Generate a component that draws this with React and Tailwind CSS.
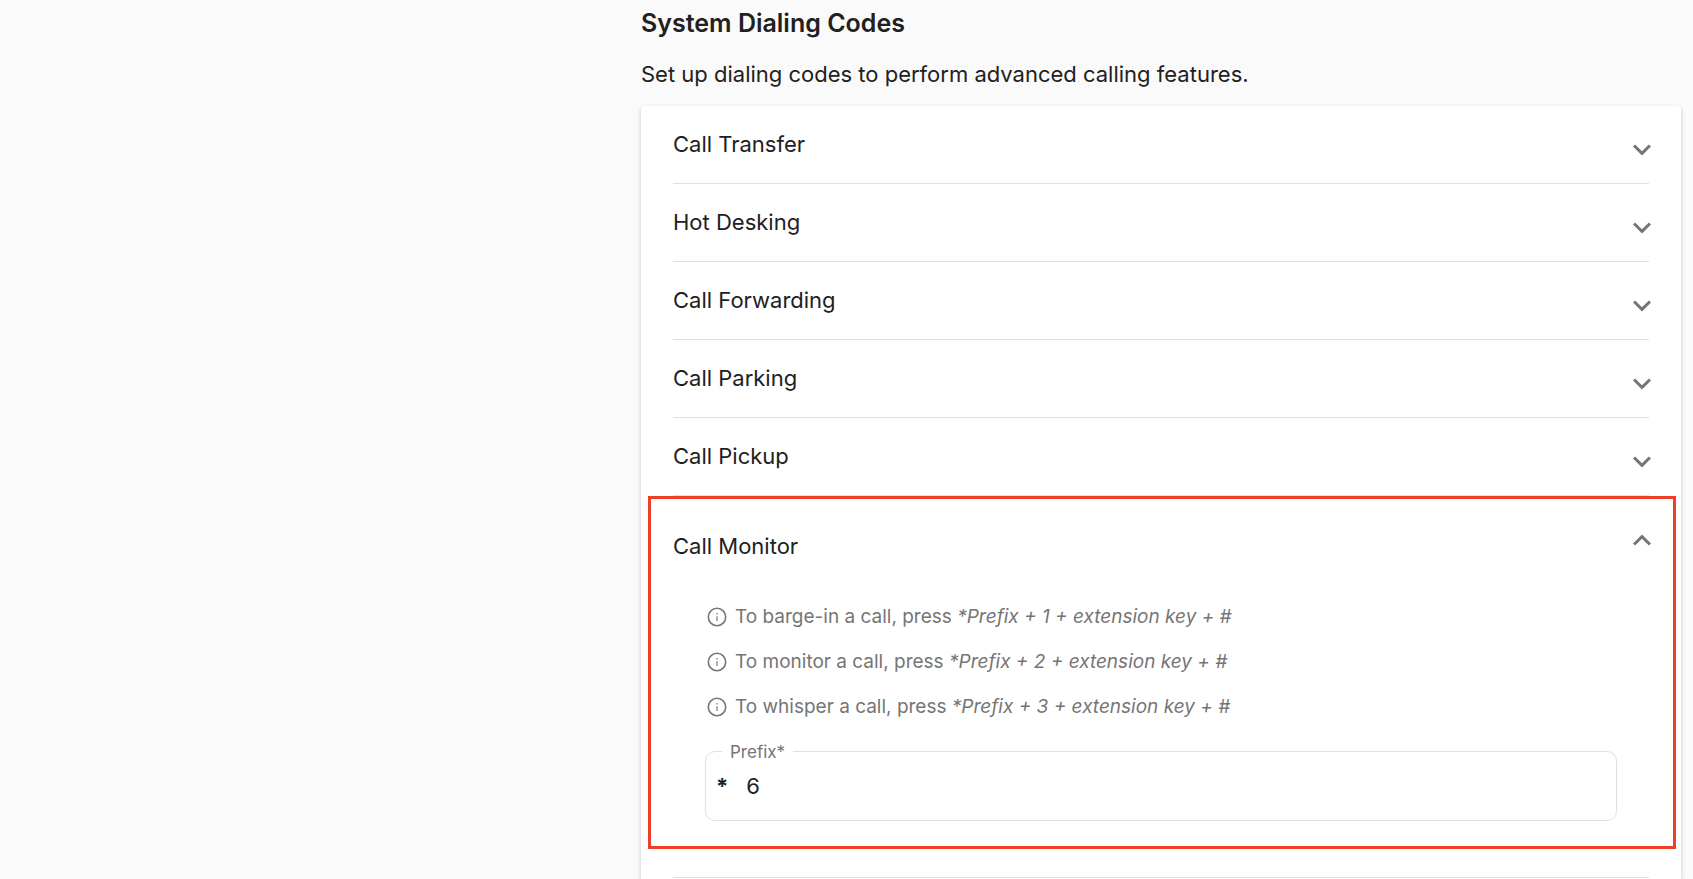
import React, { useState } from 'react';
import clsx from 'clsx';

const sections = ['Call Transfer', 'Hot Desking', 'Call Forwarding', 'Call Parking', 'Call Pickup'];

const hints = [
  { id: 1, text: 'To barge-in a call, press', code: '*Prefix + 1 + extension key + #' },
  { id: 2, text: 'To monitor a call, press', code: '*Prefix + 2 + extension key + #' },
  { id: 3, text: 'To whisper a call, press', code: '*Prefix + 3 + extension key + #' },
];

function Chevron({ up }) {
  return (
    <svg
      viewBox="6 8 12 8"
      className={clsx('h-3 w-[18px] flex-shrink-0 fill-[#757575]', up && 'rotate-180')}
      aria-hidden="true"
    >
      <path d="M16.59 8.3L12 12.88 7.41 8.3 6 9.71l6 6 6-6z" />
    </svg>
  );
}

function InfoIcon() {
  return (
    <svg viewBox="0 0 20 20" className="h-5 w-5 flex-shrink-0" fill="none" aria-hidden="true">
      <circle cx="10" cy="10" r="8.7" stroke="#757575" strokeWidth="1.6" />
      <path d="M10 9.2v4.9" stroke="#8a8a8a" strokeWidth="1.4" />
      <path d="M10 6v1.5" stroke="#8a8a8a" strokeWidth="1.4" />
    </svg>
  );
}

export default function App() {
  const [openSections, setOpenSections] = useState({ 'Call Monitor': true });
  const [prefix, setPrefix] = useState('6');

  const monitorOpen = !!openSections['Call Monitor'];

  const toggle = (title) => {
    setOpenSections((prev) => ({ ...prev, [title]: !prev[title] }));
  };

  return (
    <div className="flex min-h-screen bg-[#fafafa] font-['Inter',sans-serif] text-[#212121]">
      <div className="w-[641px] flex-shrink-0" />

      <main className="flex min-w-0 flex-1 flex-col pr-3">
        <h1 className="pt-[7px] text-[25px] leading-8 font-semibold">System Dialing Codes</h1>
        <p className="mt-[18px] mb-[15px] text-[22px] leading-[34px]">
          Set up dialing codes to perform advanced calling features.
        </p>

        <div className="flex-1 rounded-t bg-white shadow-[0_2px_4px_rgba(0,0,0,0.22)]">
          {sections.map((title) => (
            <div key={title} className="mx-8 border-b border-[#e0e0e0]">
              <button
                type="button"
                aria-expanded={!!openSections[title]}
                onClick={() => toggle(title)}
                className="-mr-0.5 flex h-[77px] w-[calc(100%+2px)] items-center justify-between text-left text-[22px]"
              >
                {title}
                <span className="pt-2.5">
                  <Chevron up={openSections[title]} />
                </span>
              </button>
            </div>
          ))}

          {/* Call Monitor */}
          <section className="mr-[5px] ml-[7px] border-[3px] border-[#ee4027] pb-[25px]">
            <button
              type="button"
              aria-expanded={monitorOpen}
              onClick={() => toggle('Call Monitor')}
              className="flex h-[94px] w-full items-center justify-between px-[22px] text-left text-[22px]"
            >
              Call Monitor
              <span className="pb-3">
                <Chevron up={monitorOpen} />
              </span>
            </button>

            {monitorOpen && (
              <div className="pt-2 pr-14 pl-[54px]">
                <ul className="flex flex-col gap-[13px] text-[19px] leading-8 text-[#757575]">
                  {hints.map((hint) => (
                    <li key={hint.id} className="flex items-center gap-2 pl-0.5">
                      <InfoIcon />
                      <span>
                        {hint.text} <i>{hint.code}</i>
                      </span>
                    </li>
                  ))}
                </ul>

                <div className="relative mt-7 flex h-[70px] items-center rounded-[10px] border border-[#e0e0e0] pl-2.5">
                  <label
                    htmlFor="prefix"
                    className="absolute -top-3 left-4 bg-white px-2 text-[17px] leading-6 text-[#757575]"
                  >
                    Prefix*
                  </label>
                  <span className="text-[22px] font-bold">*</span>
                  <input
                    id="prefix"
                    type="text"
                    value={prefix}
                    onChange={(e) => setPrefix(e.target.value)}
                    className="ml-[18px] h-full min-w-0 flex-1 bg-transparent text-[22px] outline-none"
                  />
                </div>
              </div>
            )}
          </section>

          <div className="mx-8 mt-7 border-b border-[#e0e0e0]" />
        </div>
      </main>
    </div>
  );
}
